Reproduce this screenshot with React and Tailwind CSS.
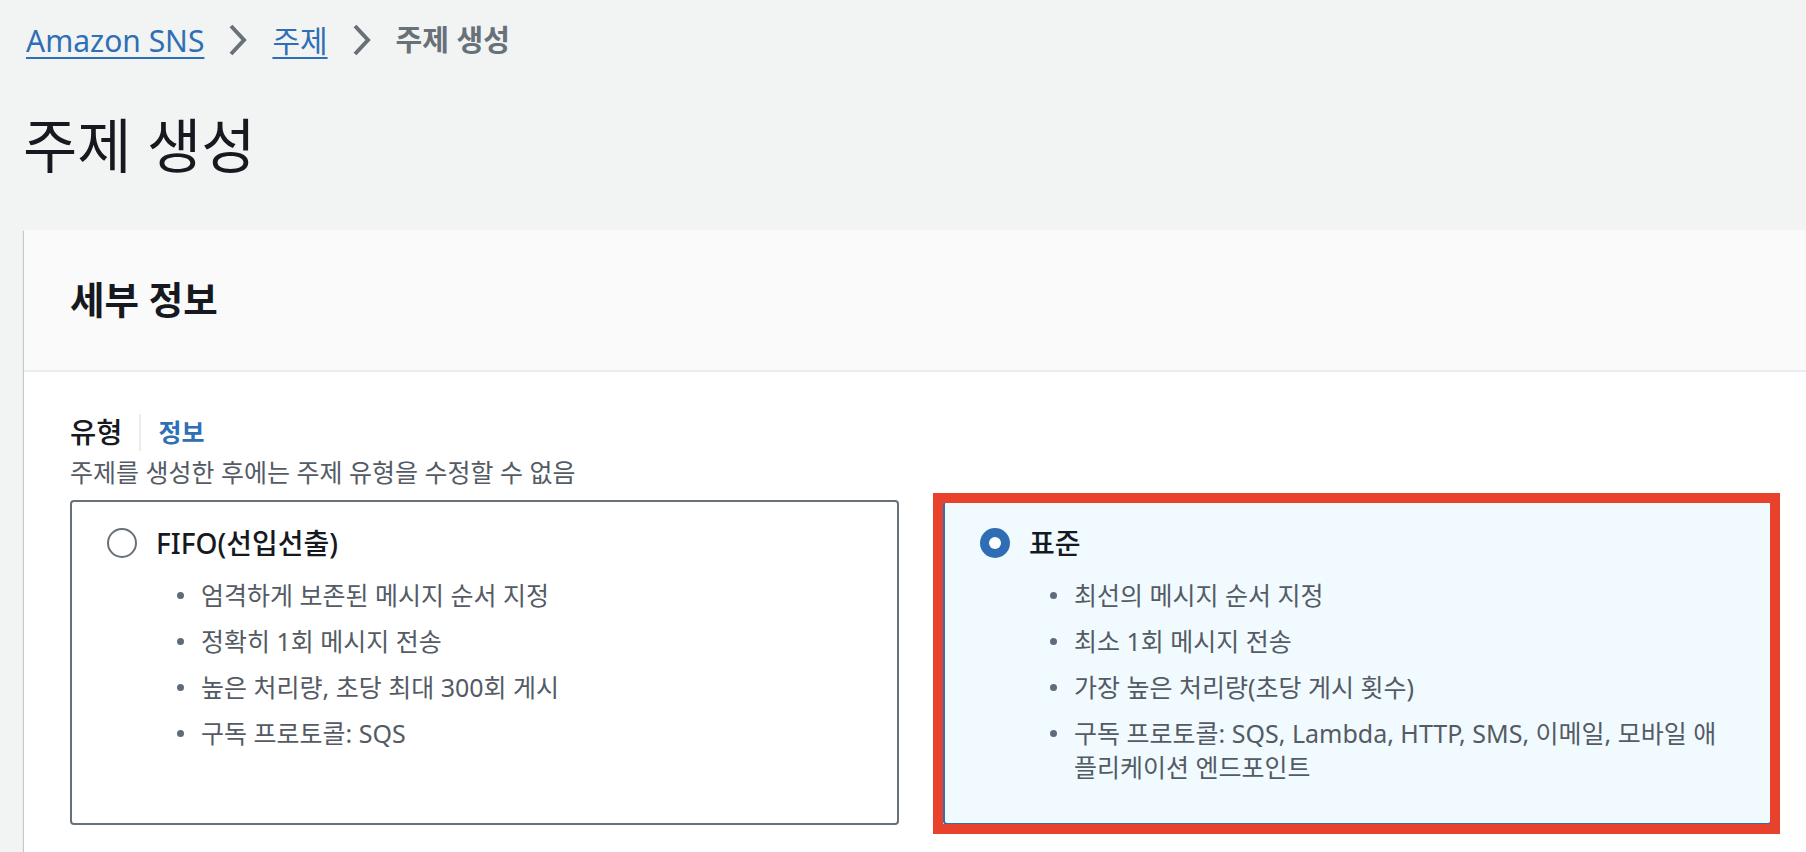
import React from 'react';

const FONT = "font-['Noto_Sans','Noto_Sans_CJK_KR',sans-serif]";

// Small breadcrumb chevron
const Chevron = () => (
  <svg width="20" height="32" viewBox="0 0 20 32" fill="none">
    <path d="M3 2 L16 16 L3 30" stroke="#687078" strokeWidth="4" strokeLinejoin="miter" />
  </svg>
);

const Bullet = ({ children }) => (
  <li className="flex items-start gap-[17px]">
    <span className="flex h-[34px] items-center">
      <span className="block h-[7px] w-[7px] rounded-full bg-[#5f6b7a]" />
    </span>
    <span className="leading-[34px]">{children}</span>
  </li>
);

const TypeCard = ({ selected, title, items }) => (
  <div
    className={`relative rounded-[4px] border-2 px-[35px] pt-[26px] pb-[39px] ${
      selected ? 'border-[#2f6eb5] bg-[#f1faff]' : 'border-[#687078] bg-white'
    }`}
  >
    <div className="flex h-[30px] items-center gap-[19px]">
      {selected ? (
        <span className="flex h-[30px] w-[30px] items-center justify-center rounded-full bg-[#2f6eb5]">
          <span className="block h-[12px] w-[12px] rounded-full bg-white" />
        </span>
      ) : (
        <span className="block h-[30px] w-[30px] rounded-full border-2 border-[#687078] bg-white" />
      )}
      <span className="text-[28px] font-medium leading-[30px] text-[#16191f]">{title}</span>
    </div>
    <ul className="mt-[20px] flex flex-col gap-[12px] pl-[70px] text-[25px] text-[#545b64]">
      {items.map((item, i) => (
        <Bullet key={i}>{item}</Bullet>
      ))}
    </ul>

    {/* red annotation box */}
    {selected && (
      <div className="pointer-events-none absolute -top-[9px] -right-[10px] -bottom-[11px] -left-[12px] border-[10px] border-[#e8412c]" />
    )}
  </div>
);

export default function App() {
  return (
    <div className={`min-h-screen w-full overflow-hidden bg-[#f2f3f3] ${FONT}`}>
      {/* Breadcrumb */}
      <nav className="mt-[22px] flex h-[36px] items-center gap-[24px] pl-[26px] text-[30px]">
        <a className="text-[#2e6fb6] underline decoration-2 underline-offset-[5px]">Amazon SNS</a>
        <Chevron />
        <a className="text-[#2e6fb6] underline decoration-2 underline-offset-[5px]">주제</a>
        <Chevron />
        <span className="text-[29px] font-bold text-[#687078]">주제 생성</span>
      </nav>

      {/* Title */}
      <h1 className="mt-[52px] pl-[23px] text-[59px] font-normal leading-[70px] text-[#16191f]">주제 생성</h1>

      {/* Details card */}
      <div className="ml-[24px] mt-[50px] w-[1794px] bg-white shadow-[0_1px_1px_0_rgba(0,28,36,0.3),1px_1px_1px_0_rgba(0,28,36,0.15),-1px_1px_1px_0_rgba(0,28,36,0.15)]">
        <div className="flex h-[142px] items-center border-b-2 border-[#eaeded] bg-[#fafafa] px-[46px]">
          <h2 className="text-[37.5px] font-bold text-[#16191f]">세부 정보</h2>
        </div>

        <div className="px-[46px] pt-[42px] pb-[60px]">
          <div className="flex h-[37px] items-center">
            <span className="text-[28.5px] font-medium text-[#16191f]">유형</span>
            <span className="mx-[17px] h-[37px] w-[2px] bg-[#eaeded]" />
            <span className="text-[25px] font-bold text-[#2e6fb6]">정보</span>
          </div>
          <p className="mt-[5px] text-[25px] leading-[32px] text-[#545b64]">
            주제를 생성한 후에는 주제 유형을 수정할 수 없음
          </p>

          <div className="mt-[12px] grid grid-cols-2 gap-[44px]">
            <TypeCard
              title="FIFO(선입선출)"
              items={[
                '엄격하게 보존된 메시지 순서 지정',
                '정확히 1회 메시지 전송',
                '높은 처리량, 초당 최대 300회 게시',
                '구독 프로토콜: SQS',
              ]}
            />
            <TypeCard
              selected
              title="표준"
              items={[
                '최선의 메시지 순서 지정',
                '최소 1회 메시지 전송',
                '가장 높은 처리량(초당 게시 횟수)',
                <>
                  <span className="whitespace-nowrap">구독 프로토콜: SQS, Lambda, HTTP, SMS, 이메일, 모바일 애</span>
                  <br />
                  플리케이션 엔드포인트
                </>,
              ]}
            />
          </div>
        </div>
      </div>
    </div>
  );
}
